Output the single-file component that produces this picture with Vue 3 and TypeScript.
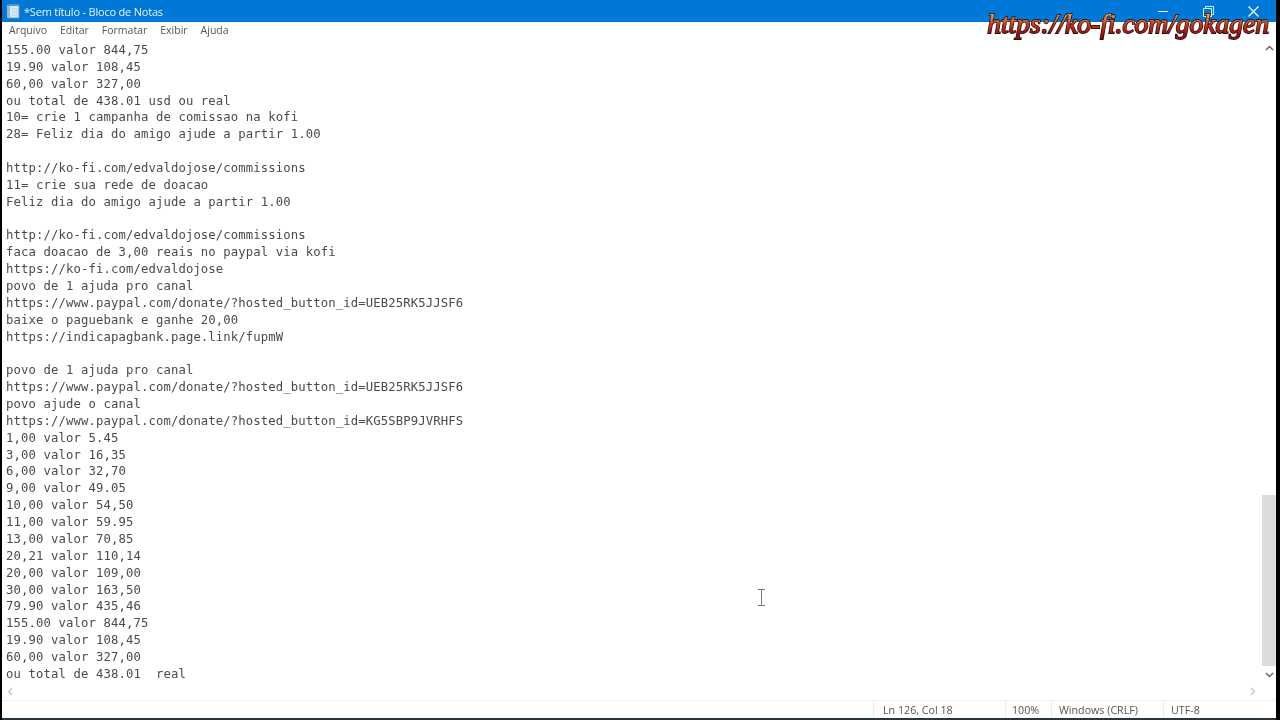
<template>
  <div class="window">
    <header class="title-bar">
      <svg class="note-icon" width="15" height="15" viewBox="0 0 15 15">
        <path d="M2 1h11v13H2z" fill="#d6e9f6" stroke="#6f96ad" />
        <path d="M1 1h3v13H1z" fill="#8fbcd8" />
        <path d="M2 0h11v2H2z" fill="#5c93b8" />
        <path d="M6 5h6M6 8h6M6 11h5" stroke="#b5d2e4" />
      </svg>
      <span class="title">*Sem título - Bloco de Notas</span>
      <div class="controls">
        <span class="ctl"><svg width="11" height="11" viewBox="0 0 11 11"><path d="M0 5.5h10" stroke="#fff" /></svg></span>
        <span class="ctl"><svg width="11" height="11" viewBox="0 0 11 11"><path d="M.5 2.5h8v8h-8zM2.5 2.5v-2h8v8h-2" fill="none" stroke="#dbeeff" /></svg></span>
        <span class="ctl"><svg width="11" height="11" viewBox="0 0 11 11"><path d="M.5.5l10 10M10.5.5l-10 10" stroke="#fff" stroke-width="1.2" /></svg></span>
      </div>
    </header>

    <nav class="menu-bar">
      <span v-for="item in menu" :key="item">{{ item }}</span>
    </nav>

    <main class="editor">
      <pre class="text"><div v-for="(line, i) in lines" :key="i" class="line">{{ line }}</div></pre>
      <div class="v-scroll">
        <svg width="9" height="6" viewBox="0 0 9 6"><path d="M1 5l3.5-3.5L8 5" fill="none" stroke="#606060" stroke-width="1.4" /></svg>
        <div class="v-track"><div class="v-thumb"></div></div>
        <svg width="9" height="6" viewBox="0 0 9 6"><path d="M1 1l3.5 3.5L8 1" fill="none" stroke="#606060" stroke-width="1.4" /></svg>
      </div>
    </main>

    <div class="h-scroll">
      <svg width="6" height="9" viewBox="0 0 6 9"><path d="M5 1L1.5 4.5 5 8" fill="none" stroke="#c4c4c4" stroke-width="1.3" /></svg>
      <svg width="6" height="9" viewBox="0 0 6 9"><path d="M1 1l3.5 3.5L1 8" fill="none" stroke="#c4c4c4" stroke-width="1.3" /></svg>
    </div>

    <footer class="status-bar">
      <span class="cell pos">Ln 126, Col 18</span>
      <span class="cell zoom">100%</span>
      <span class="cell eol">Windows (CRLF)</span>
      <span class="cell enc">UTF-8</span>
    </footer>

    <div class="watermark" data-text="https://ko-fi.com/gokagen">https://ko-fi.com/gokagen</div>

    <svg class="cursor" width="9" height="17" viewBox="0 0 9 17">
      <path d="M1 .5h7M1 16.5h7M4.5 .5v16" fill="none" stroke="#777" />
    </svg>
  </div>
</template>

<script setup lang="ts">
const menu: string[] = ['Arquivo', 'Editar', 'Formatar', 'Exibir', 'Ajuda']

const lines: string[] = [
  '155.00 valor 844,75',
  '19.90 valor 108,45',
  '60,00 valor 327,00',
  'ou total de 438.01 usd ou real',
  '10= crie 1 campanha de comissao na kofi',
  '28= Feliz dia do amigo ajude a partir 1.00',
  '',
  'http://ko-fi.com/edvaldojose/commissions',
  '11= crie sua rede de doacao',
  'Feliz dia do amigo ajude a partir 1.00',
  '',
  'http://ko-fi.com/edvaldojose/commissions',
  'faca doacao de 3,00 reais no paypal via kofi',
  'https://ko-fi.com/edvaldojose',
  'povo de 1 ajuda pro canal',
  'https://www.paypal.com/donate/?hosted_button_id=UEB25RK5JJSF6',
  'baixe o paguebank e ganhe 20,00',
  'https://indicapagbank.page.link/fupmW',
  '',
  'povo de 1 ajuda pro canal',
  'https://www.paypal.com/donate/?hosted_button_id=UEB25RK5JJSF6',
  'povo ajude o canal',
  'https://www.paypal.com/donate/?hosted_button_id=KG5SBP9JVRHFS',
  '1,00 valor 5.45',
  '3,00 valor 16,35',
  '6,00 valor 32,70',
  '9,00 valor 49.05',
  '10,00 valor 54,50',
  '11,00 valor 59.95',
  '13,00 valor 70,85',
  '20,21 valor 110,14',
  '20,00 valor 109,00',
  '30,00 valor 163,50',
  '79.90 valor 435,46',
  '155.00 valor 844,75',
  '19.90 valor 108,45',
  '60,00 valor 327,00',
  'ou total de 438.01  real'
]
</script>

<style>
html,
body {
  margin: 0;
  background: #000;
}
</style>

<style scoped>
.window {
  position: relative;
  width: 1274px;
  height: 718px;
  margin-left: 2px;
  background: #fff;
  display: flex;
  flex-direction: column;
  overflow: hidden;
  font-family: "Open Sans", "Noto Sans", sans-serif;
  border-bottom: 2px solid #26353f;
  filter: blur(0.3px);
}

.title-bar {
  height: 22px;
  flex: none;
  background: #0078d7;
  color: #e6f3ff;
  display: flex;
  align-items: center;
  padding-left: 4px;
  font-size: 11px;
  letter-spacing: -0.2px;
}

.note-icon {
  margin-right: 3px;
}

.controls {
  margin-left: auto;
  display: flex;
}

.ctl {
  width: 45px;
  height: 20px;
  display: flex;
  align-items: center;
  justify-content: center;
}

.menu-bar {
  height: 18px;
  flex: none;
  display: flex;
  gap: 13px;
  padding-left: 7px;
  padding-bottom: 2px;
  box-sizing: border-box;
  align-items: center;
  font-size: 10.5px;
  color: #555;
}

.editor {
  flex: 1;
  min-height: 0;
  display: flex;
}

.text {
  flex: 1;
  margin: 0;
  padding: 2px 0 0 4px;
  font-family: "DejaVu Sans Mono", "Liberation Mono", monospace;
  font-size: 12.25px;
  letter-spacing: 0.12px;
  color: #4a4a4a;
  overflow: hidden;
}

.line {
  height: 16.87px;
  line-height: 16.87px;
}

.v-scroll {
  width: 14px;
  flex: none;
  display: flex;
  flex-direction: column;
  align-items: center;
  justify-content: space-between;
  padding: 5px 0;
  box-sizing: border-box;
}

.v-track {
  flex: 1;
  width: 100%;
  padding-top: 441px;
  box-sizing: border-box;
  display: flex;
  margin: 3px 0 6px;
}

.v-thumb {
  flex: 1;
  background: #dcdcdc;
}

.h-scroll {
  height: 17px;
  flex: none;
  display: flex;
  justify-content: space-between;
  align-items: center;
  padding: 0 20px 0 5px;
}

.status-bar {
  height: 18px;
  flex: none;
  display: flex;
  justify-content: flex-end;
  align-items: center;
  border-top: 1px solid #f0f0f0;
  box-sizing: border-box;
  font-size: 10.7px;
  color: #555;
}

.cell {
  box-sizing: border-box;
  height: 100%;
  display: flex;
  align-items: center;
  border-left: 1px solid #ececec;
}

.pos { width: 132px; padding-left: 9px; }
.zoom { width: 46px; padding-left: 6px; }
.eol { width: 112px; padding-left: 7px; }
.enc { width: 113px; padding-left: 7px; }

.watermark {
  position: absolute;
  top: 4px;
  right: 7px;
  font-family: "Liberation Serif", serif;
  font-style: italic;
  font-size: 27.5px;
  line-height: 40px;
  white-space: nowrap;
  color: #1a0503;
  -webkit-text-stroke: 1.8px #1a0503;
}

.watermark::after {
  content: attr(data-text);
  position: absolute;
  left: 0;
  top: 0;
  background: linear-gradient(#e8984a 30%, #c23a1f 52%, #8f0f12 78%);
  -webkit-background-clip: text;
  background-clip: text;
  color: transparent;
  -webkit-text-stroke: 0.5px transparent;
}

.cursor {
  position: absolute;
  left: 755px;
  top: 589px;
}
</style>
